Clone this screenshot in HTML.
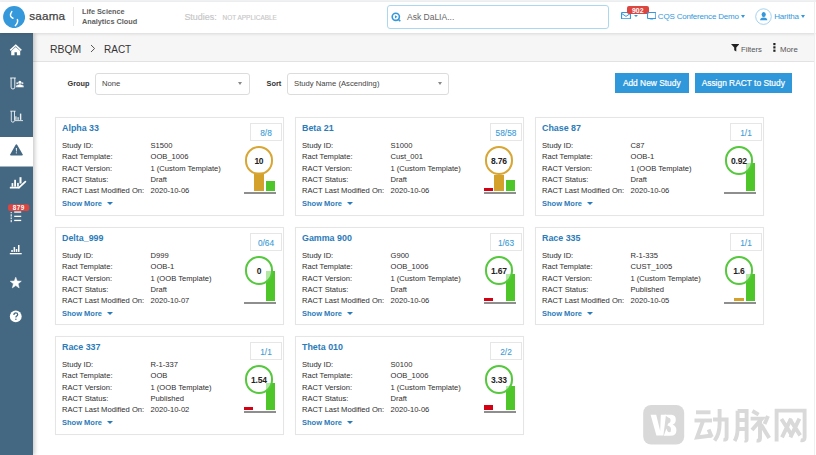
<!DOCTYPE html>
<html><head><meta charset="utf-8">
<style>
*{box-sizing:border-box;margin:0;padding:0}
html,body{width:816px;height:455px;overflow:hidden;background:#fff;font-family:"Liberation Sans",sans-serif;color:#333}
.a{position:absolute;white-space:nowrap}
#topstrip{position:absolute;left:0;top:0;width:816px;height:2px;background:#f1f2f4}
#header{position:absolute;left:0;top:2px;width:816px;height:31px;background:#fff;box-shadow:0 1px 3px rgba(0,0,0,.12);z-index:3}
#side{position:absolute;left:0;top:33px;width:33px;height:422px;background:#456882;z-index:2;box-shadow:2px 0 4px rgba(0,0,0,.2)}
#crumb{position:absolute;left:33px;top:33px;width:781px;height:29px;background:#f6f6f6;border-bottom:1px solid #e2e2e2}
#rline{position:absolute;left:814px;top:0;width:1px;height:455px;background:#efefef;z-index:6}
.sel{position:absolute;height:21.5px;border:1px solid #dcdcdc;border-radius:3px;background:#fff}
.sel .t{position:absolute;left:6px;top:4.5px;font-size:7.7px;color:#444}
.caret{position:absolute;width:0;height:0;border-left:2.5px solid transparent;border-right:2.5px solid transparent;border-top:3px solid #888}
.btn{position:absolute;top:73px;height:19.5px;background:#2f98db;color:#fff;font-size:8.4px;text-align:center;line-height:21px;-webkit-text-stroke:0.2px #fff}
.card{position:absolute;width:229px;height:98px;border:1px solid #e5e5e5;background:#fff;box-shadow:0 0 1px rgba(0,0,0,.04)}
.card .title{position:absolute;left:6px;top:4.8px;font-size:8.9px;font-weight:bold;color:#2b7bb9}
.card .lab{position:absolute;left:6px;font-size:7.6px;color:#2e2e2e}
.card .val{position:absolute;left:94.5px;font-size:7.6px;color:#2e2e2e}
.card .more{position:absolute;left:6px;top:80.7px;font-size:7.5px;color:#2b7bb9;font-weight:bold}
.card .more i{position:absolute;left:45.2px;top:3.3px;width:0;height:0;border-left:3px solid transparent;border-right:3px solid transparent;border-top:3.5px solid #2b7bb9}
.badge{position:absolute;left:194px;top:4.6px;width:32px;height:18px;border:1px solid #e6e6e6;color:#3c9bd8;font-size:8.3px;text-align:center;line-height:18px;-webkit-text-stroke:0.1px #3c9bd8}
.chart{position:absolute;left:188.2px;top:0;width:34px;height:80px}
.base{position:absolute;left:0;top:74px;width:32px;height:2px;background:#8e8e8e}
.bar{position:absolute;bottom:7px;width:9.2px}
.r{left:0;background:#d40014}
.g{left:10.3px;background:#d4a12b}
.gr{left:21.6px;width:9.4px;background:#4ec629}
.circ{position:absolute;left:0.4px;top:28.3px;width:28.6px;height:28.6px;border-radius:50%;border:2px solid #55c83d;background:rgba(255,255,255,.58);font-size:8.5px;font-weight:bold;color:#222;text-align:center;line-height:26.5px;letter-spacing:-0.25px}
.circ.gold{border-color:#d8a634}
</style></head><body>
<div id="topstrip"></div>
<div id="header">
  <!-- logo -->
  <svg class="a" style="left:3.3px;top:3.8px" width="22.2" height="22.2" viewBox="0 0 22.2 22.2">
    <circle cx="11.1" cy="11.1" r="11" fill="#3498da"/>
    <path d="M8.8 5.6 Q7 8 7.6 10 Q8.1 11.4 10 12.3" stroke="#fff" stroke-width="1.5" fill="none" stroke-linecap="round"/>
    <path d="M14.4 13.6 Q15.5 16 12.4 19.6" stroke="#fff" stroke-width="1.5" fill="none" stroke-linecap="round"/>
  </svg>
  <div class="a" style="left:29.2px;top:7px;font-size:11.7px;color:#444;letter-spacing:0.2px;-webkit-text-stroke:0.25px #444">saama</div>
  <div class="a" style="left:73px;top:5px;width:1px;height:19px;background:#e4e4e4"></div>
  <div class="a" style="left:82px;top:5.4px;font-size:7.3px;font-weight:bold;color:#606060;line-height:9.7px">Life Science<br>Analytics Cloud</div>
  <div class="a" style="left:184.4px;top:9.5px;font-size:8.95px;color:#c6c6c6;-webkit-text-stroke:0.15px #c6c6c6">Studies:</div>
  <div class="a" style="left:222.6px;top:12px;font-size:6.45px;color:#c6c6c6;-webkit-text-stroke:0.12px #c6c6c6">NOT APPLICABLE</div>
  <!-- search -->
  <div class="a" style="left:386.5px;top:3px;width:222.5px;height:23.5px;border:1px solid #acd7f1;border-radius:3px"></div>
  <svg class="a" style="left:391.2px;top:10px" width="10" height="10" viewBox="0 0 10 10">
    <circle cx="4.8" cy="4.8" r="3.6" stroke="#3498da" stroke-width="1.6" fill="none"/>
    <path d="M4 3.2 L6.4 4.8 L4 6.4Z" fill="#3498da"/>
    <path d="M7 7 L9.3 9.3" stroke="#3498da" stroke-width="1.6"/>
  </svg>
  <div class="a" style="left:407px;top:9.5px;font-size:8.5px;color:#666">Ask DaLIA...</div>
  <!-- envelope -->
  <svg class="a" style="left:621.3px;top:9.7px" width="10" height="7.4" viewBox="0 0 10 7.4">
    <rect x="0.55" y="0.55" width="8.9" height="6.3" rx="0.6" fill="none" stroke="#3498da" stroke-width="1.1"/>
    <path d="M0.8 1.6 L5 4.4 L9.2 1.6" fill="none" stroke="#3498da" stroke-width="1"/>
  </svg>
  <div class="caret" style="left:634px;top:12.9px;border-left-width:2.3px;border-right-width:2.3px;border-top:2.5px solid #3498da"></div>
  <div class="a" style="left:627px;top:3.5px;width:21.6px;height:8px;background:#dc4640;border-radius:2px;color:#fff;font-size:6.9px;font-weight:bold;text-align:center;line-height:9.2px;letter-spacing:0.1px">902</div>
  <!-- monitor -->
  <svg class="a" style="left:646.5px;top:9.5px" width="9.4" height="8.4" viewBox="0 0 9.4 8.4">
    <rect x="0.55" y="0.55" width="8.3" height="6" rx="0.5" fill="none" stroke="#3498da" stroke-width="1.1"/>
    <path d="M3.2 8 H6.2" stroke="#3498da" stroke-width="0.9"/>
  </svg>
  <div class="a" style="left:657.8px;top:10px;font-size:8px;letter-spacing:-0.18px;color:#3498da">CQS Conference Demo</div>
  <div class="caret" style="left:741.2px;top:13.2px;border-left-width:2.6px;border-right-width:2.6px;border-top:3px solid #3498da"></div>
  <!-- user -->
  <svg class="a" style="left:754.5px;top:5.5px" width="18" height="18" viewBox="0 0 18 18">
    <circle cx="8.5" cy="8.6" r="7.8" fill="none" stroke="#8cc6ec" stroke-width="0.8"/>
    <ellipse cx="8.7" cy="6.5" rx="2.1" ry="2.5" fill="#3498da"/>
    <path d="M5 12.3 Q5.2 9.6 8.7 9.4 Q12.2 9.6 12.4 12.3Z" fill="#3498da"/>
  </svg>
  <div class="a" style="left:774.3px;top:10px;font-size:8px;letter-spacing:-0.2px;color:#3498da">Haritha</div>
  <div class="caret" style="left:801px;top:13.2px;border-left-width:2.6px;border-right-width:2.6px;border-top:3px solid #3498da"></div>
</div>

<div id="side"></div>
<svg id="sideicons" style="position:absolute;left:0;top:0;z-index:4" width="33" height="455" viewBox="0 0 33 455">
<g fill="#fff" stroke="none">
<!-- home -->
<path d="M10.2 50.4 L15.75 45.2 L21.3 50.4" fill="none" stroke="#fff" stroke-width="1.5" stroke-linejoin="miter"/>
<path d="M11.2 51 L15.75 47 L20.2 51 V55.2 H16.9 V52.2 H14.5 V55.2 H11.2Z" fill="#fff"/>
</g>
<!-- tube + people -->
<g fill="none" stroke="#fff" stroke-width="1" opacity="0.88">
<path d="M10.2 78 H15.8 M11.1 78 V87.2 Q11.1 89 12.95 89 Q14.8 89 14.8 87.2 V78"/>
</g>
<g fill="#fff">
<circle cx="19.9" cy="82.2" r="1.5"/>
<circle cx="17.3" cy="83.2" r="1.05" opacity="0.85"/>
<circle cx="22.4" cy="83.2" r="1.05" opacity="0.85"/>
<path d="M17.4 87.3 Q17.4 84.3 19.9 84.3 Q22.4 84.3 22.4 87.3Z"/>
<path d="M15.8 87.3 Q15.8 84.9 17.4 84.9 Q18.2 84.9 18.4 85.3 L17.6 87.3Z" opacity="0.85"/>
<path d="M23.9 87.3 Q23.9 84.9 22.3 84.9 Q21.5 84.9 21.3 85.3 L22.1 87.3Z" opacity="0.85"/>
</g>
<!-- tube + chart -->
<g fill="none" stroke="#fff" stroke-width="0.9" opacity="0.9">
<path d="M10.3 111.2 H15.6 M11.3 111.2 V120.5 Q11.3 122.2 12.8 122.2 Q14.5 122.2 14.5 120.5 V111.2"/>
</g>
<g fill="#fff" opacity="0.9">
<rect x="15.3" y="116.3" width="1.2" height="3.6"/>
<rect x="17.5" y="117.2" width="1.2" height="2.7"/>
<rect x="19.9" y="113.6" width="1.4" height="6.3"/>
<rect x="15" y="120.2" width="8" height="0.9"/>
</g>
<!-- active -->
<rect x="0" y="137" width="33" height="29.5" fill="#fff"/>
<path d="M16.4 144.2 Q16.9 144.2 17.3 144.9 L22.6 154.3 Q23 155.6 21.8 155.6 H11 Q9.8 155.6 10.3 154.3 L15.5 144.9 Q15.9 144.2 16.4 144.2Z" fill="#456882"/>
<path d="M15.8 148 H16.9 L16.7 151.6 H16Z" fill="#fff"/>
<circle cx="16.35" cy="152.8" r="0.6" fill="#fff"/>
<!-- trend -->
<g fill="#fff">
<rect x="11.6" y="183.1" width="1.7" height="3.6"/>
<rect x="14.2" y="179.8" width="1.8" height="6.9"/>
<rect x="17.1" y="182.9" width="1.7" height="3.8"/>
<rect x="19.5" y="177.2" width="2" height="6.3"/>
<rect x="9.8" y="186.8" width="9.6" height="1.8" rx="0.5"/>
</g>
<path d="M19 187.6 L25.4 181.6" stroke="#fff" stroke-width="1.7" stroke-linecap="round"/>
<!-- badge 879 -->
<rect x="8.1" y="204.2" width="21.1" height="6.8" rx="2" fill="#dc4640"/>
<text x="18.8" y="210.2" font-family="Liberation Sans" font-size="6.4" font-weight="bold" fill="#fff" text-anchor="middle" letter-spacing="0.45">879</text>
<g fill="#fff">
<rect x="14.2" y="211.4" width="7" height="1.3"/>
<rect x="14.2" y="215.7" width="7" height="1.3"/>
<rect x="14.2" y="219.8" width="7" height="1.3"/>
<rect x="10.6" y="212" width="1.3" height="1.2" opacity="0.8"/><rect x="10.6" y="214.2" width="1.3" height="2.4" opacity="0.8"/><rect x="10.6" y="217.4" width="1.3" height="1.6" opacity="0.8"/><rect x="10.6" y="219.8" width="1.3" height="2.4" opacity="0.8"/>
</g>
<!-- bars -->
<g fill="#fff">
<rect x="11.2" y="250.1" width="1.7" height="1.8"/>
<rect x="13.6" y="247" width="1.5" height="4.9"/>
<rect x="15.8" y="249" width="1.5" height="2.9"/>
<rect x="18" y="245" width="1.5" height="6.9"/>
<rect x="9.8" y="253" width="11.9" height="1.3"/>
</g>
<!-- star -->
<path d="M15.75 277.2 L17.2 281 L21.3 281.2 L18.1 283.8 L19.2 287.9 L15.75 285.6 L12.3 287.9 L13.4 283.8 L10.2 281.2 L14.3 281Z" fill="#fff" stroke="#fff" stroke-width="0.5" stroke-linejoin="round"/>
<!-- question -->
<circle cx="15.75" cy="316.4" r="5.9" fill="#fff"/>
<path d="M13.9 315 Q13.9 312.8 15.8 312.8 Q17.7 312.8 17.7 314.5 Q17.7 315.5 16.6 316.1 Q15.9 316.5 15.9 317.6" fill="none" stroke="#456882" stroke-width="1.2"/>
<circle cx="15.9" cy="319.3" r="0.75" fill="#456882"/>
</svg>

<div id="crumb">
  <div class="a" style="left:17px;top:10.5px;font-size:10.4px;color:#333">RBQM</div>
  <svg class="a" style="left:56.5px;top:11px" width="6" height="9" viewBox="0 0 6 9"><path d="M1 1 L4.6 4.5 L1 8" fill="none" stroke="#555" stroke-width="1"/></svg>
  <div class="a" style="left:71px;top:10.5px;font-size:10px;color:#333">RACT</div>
  <svg class="a" style="left:697.5px;top:11px" width="8.5" height="7.5" viewBox="0 0 8.5 7.5"><path d="M0 0 H8.5 L5.3 3.4 V7.5 L3.2 6.2 V3.4Z" fill="#222"/></svg>
  <div class="a" style="left:708px;top:12px;font-size:7.7px;color:#555">Filters</div>
  <svg class="a" style="left:740px;top:10px" width="3" height="9" viewBox="0 0 3 9"><rect x="0.3" y="0" width="2.2" height="2.2" fill="#222"/><rect x="0.3" y="3.3" width="2.2" height="2.2" fill="#222"/><rect x="0.3" y="6.6" width="2.2" height="2.2" fill="#222"/></svg>
  <div class="a" style="left:747px;top:12px;font-size:7.8px;color:#555">More</div>
</div>
<div id="rline"></div>

<!-- filter row -->
<div class="a" style="left:67.5px;top:79px;font-size:7.3px;font-weight:bold;color:#333">Group</div>
<div class="sel" style="left:95px;top:73px;width:154.5px"><div class="t">None</div><div class="caret" style="left:141.5px;top:8px;border-left-width:2.6px;border-right-width:2.6px;border-top-width:3px"></div></div>
<div class="a" style="left:266.5px;top:79px;font-size:7.4px;font-weight:bold;color:#333">Sort</div>
<div class="sel" style="left:287px;top:73px;width:161.5px"><div class="t">Study Name (Ascending)</div><div class="caret" style="left:149.5px;top:8px;border-left-width:2.6px;border-right-width:2.6px;border-top-width:3px"></div></div>
<div class="btn" style="left:614.5px;width:74.5px">Add New Study</div>
<div class="btn" style="left:694.5px;width:97.5px">Assign RACT to Study</div>

<div id="cards">
<div class="card" style="left:55px;top:117px;height:99px"><div class="title">Alpha 33</div><div class="lab" style="top:23.0px">Study ID:</div><div class="val" style="top:23.0px">S1500</div><div class="lab" style="top:34.3px">Ract Template:</div><div class="val" style="top:34.3px">OOB_1006</div><div class="lab" style="top:45.6px">RACT Version:</div><div class="val" style="top:45.6px">1 (Custom Template)</div><div class="lab" style="top:56.9px">RACT Status:</div><div class="val" style="top:56.9px">Draft</div><div class="lab" style="top:68.1px">RACT Last Modified On:</div><div class="val" style="top:68.1px">2020-10-06</div><div class="more">Show More<i></i></div><div class="badge">8/8</div><div class="chart"><div class="base"></div><div class="bar g" style="height:19px"></div><div class="bar gr" style="height:9.8px"></div><div class="circ gold">10</div></div></div>
<div class="card" style="left:295px;top:117px;height:99px"><div class="title">Beta 21</div><div class="lab" style="top:23.0px">Study ID:</div><div class="val" style="top:23.0px">S1000</div><div class="lab" style="top:34.3px">Ract Template:</div><div class="val" style="top:34.3px">Cust_001</div><div class="lab" style="top:45.6px">RACT Version:</div><div class="val" style="top:45.6px">1 (Custom Template)</div><div class="lab" style="top:56.9px">RACT Status:</div><div class="val" style="top:56.9px">Draft</div><div class="lab" style="top:68.1px">RACT Last Modified On:</div><div class="val" style="top:68.1px">2020-10-06</div><div class="more">Show More<i></i></div><div class="badge">58/58</div><div class="chart"><div class="base"></div><div class="bar r" style="height:3px"></div><div class="bar g" style="height:16px"></div><div class="bar gr" style="height:11px"></div><div class="circ gold">8.76</div></div></div>
<div class="card" style="left:535px;top:117px;height:99px"><div class="title">Chase 87</div><div class="lab" style="top:23.0px">Study ID:</div><div class="val" style="top:23.0px">C87</div><div class="lab" style="top:34.3px">Ract Template:</div><div class="val" style="top:34.3px">OOB-1</div><div class="lab" style="top:45.6px">RACT Version:</div><div class="val" style="top:45.6px">1 (OOB Template)</div><div class="lab" style="top:56.9px">RACT Status:</div><div class="val" style="top:56.9px">Draft</div><div class="lab" style="top:68.1px">RACT Last Modified On:</div><div class="val" style="top:68.1px">2020-10-06</div><div class="more">Show More<i></i></div><div class="badge">1/1</div><div class="chart"><div class="base"></div><div class="bar gr" style="height:28.5px"></div><div class="circ">0.92</div></div></div>
<div class="card" style="left:55px;top:227px;height:98px"><div class="title">Delta_999</div><div class="lab" style="top:23.0px">Study ID:</div><div class="val" style="top:23.0px">D999</div><div class="lab" style="top:34.3px">Ract Template:</div><div class="val" style="top:34.3px">OOB-1</div><div class="lab" style="top:45.6px">RACT Version:</div><div class="val" style="top:45.6px">1 (OOB Template)</div><div class="lab" style="top:56.9px">RACT Status:</div><div class="val" style="top:56.9px">Draft</div><div class="lab" style="top:68.1px">RACT Last Modified On:</div><div class="val" style="top:68.1px">2020-10-07</div><div class="more">Show More<i></i></div><div class="badge">0/64</div><div class="chart"><div class="base"></div><div class="bar gr" style="height:29.6px"></div><div class="circ">0</div></div></div>
<div class="card" style="left:295px;top:227px;height:98px"><div class="title">Gamma 900</div><div class="lab" style="top:23.0px">Study ID:</div><div class="val" style="top:23.0px">G900</div><div class="lab" style="top:34.3px">Ract Template:</div><div class="val" style="top:34.3px">OOB_1006</div><div class="lab" style="top:45.6px">RACT Version:</div><div class="val" style="top:45.6px">1 (Custom Template)</div><div class="lab" style="top:56.9px">RACT Status:</div><div class="val" style="top:56.9px">Draft</div><div class="lab" style="top:68.1px">RACT Last Modified On:</div><div class="val" style="top:68.1px">2020-10-06</div><div class="more">Show More<i></i></div><div class="badge">1/63</div><div class="chart"><div class="base"></div><div class="bar r" style="height:3px"></div><div class="bar gr" style="height:27px"></div><div class="circ">1.67</div></div></div>
<div class="card" style="left:535px;top:227px;height:98px"><div class="title">Race 335</div><div class="lab" style="top:23.0px">Study ID:</div><div class="val" style="top:23.0px">R-1-335</div><div class="lab" style="top:34.3px">Ract Template:</div><div class="val" style="top:34.3px">CUST_1005</div><div class="lab" style="top:45.6px">RACT Version:</div><div class="val" style="top:45.6px">1 (Custom Template)</div><div class="lab" style="top:56.9px">RACT Status:</div><div class="val" style="top:56.9px">Published</div><div class="lab" style="top:68.1px">RACT Last Modified On:</div><div class="val" style="top:68.1px">2020-10-05</div><div class="more">Show More<i></i></div><div class="badge">1/1</div><div class="chart"><div class="base"></div><div class="bar g" style="height:3.4px"></div><div class="bar gr" style="height:26.6px"></div><div class="circ">1.6</div></div></div>
<div class="card" style="left:55px;top:336px;height:99px"><div class="title">Race 337</div><div class="lab" style="top:23.0px">Study ID:</div><div class="val" style="top:23.0px">R-1-337</div><div class="lab" style="top:34.3px">Ract Template:</div><div class="val" style="top:34.3px">OOB</div><div class="lab" style="top:45.6px">RACT Version:</div><div class="val" style="top:45.6px">1 (OOB Template)</div><div class="lab" style="top:56.9px">RACT Status:</div><div class="val" style="top:56.9px">Published</div><div class="lab" style="top:68.1px">RACT Last Modified On:</div><div class="val" style="top:68.1px">2020-10-02</div><div class="more">Show More<i></i></div><div class="badge">1/1</div><div class="chart"><div class="base"></div><div class="bar r" style="height:2.8px"></div><div class="bar gr" style="height:26.6px"></div><div class="circ">1.54</div></div></div>
<div class="card" style="left:295px;top:336px;height:99px"><div class="title">Theta 010</div><div class="lab" style="top:23.0px">Study ID:</div><div class="val" style="top:23.0px">S0100</div><div class="lab" style="top:34.3px">Ract Template:</div><div class="val" style="top:34.3px">OOB_1006</div><div class="lab" style="top:45.6px">RACT Version:</div><div class="val" style="top:45.6px">1 (Custom Template)</div><div class="lab" style="top:56.9px">RACT Status:</div><div class="val" style="top:56.9px">Draft</div><div class="lab" style="top:68.1px">RACT Last Modified On:</div><div class="val" style="top:68.1px">2020-10-06</div><div class="more">Show More<i></i></div><div class="badge">2/2</div><div class="chart"><div class="base"></div><div class="bar r" style="height:5.5px"></div><div class="bar gr" style="height:23.8px"></div><div class="circ">3.33</div></div></div>
</div>
<svg id="wm" style="position:absolute;left:640px;top:400px;z-index:5" width="174" height="50" viewBox="640 400 174 50">
<rect x="643.2" y="405" width="41" height="39.6" rx="8" fill="#d9d9d9"/>
<path d="M650.6 414.8 H656.2 L660.2 431 L660.8 414.8 H666 L663.4 435.6 H656.4Z" fill="#fff"/>
<path d="M664.4 414.8 H671.5 Q676 415 675.8 420 Q675.6 423.6 672.6 424.6 Q676.4 426 676.4 430.4 Q676.2 435.8 670.6 435.8 H663.8 L666.4 428.6 Q667.6 432.4 669.2 432.2 Q671.2 432 671 429.4 Q670.8 426.2 667.4 425.6 L668.2 423.4 Q670.8 422.8 670.6 419.8 Q670.4 417.8 668.6 417.8 Z" fill="#fff"/>
<g fill="none" stroke="#d9d9d9" stroke-width="3.9" stroke-linecap="butt" stroke-linejoin="miter">
<!-- 动 -->
<path d="M696 412.3 H710.5"/>
<path d="M694.5 420.5 H712"/>
<path d="M703 421 L697 437.5 L712 435.5"/>
<path d="M708.6 429.5 L711.8 437"/>
<path d="M713 419.5 H726.6 V437.5 Q726.6 440 723.4 439.6"/>
<path d="M719.6 409 V424 Q719.6 434 714.6 440.6"/>
<!-- 脉 -->
<path d="M737.6 410.8 V428 Q737.6 436 734.6 441"/>
<path d="M737.6 411 H746.6 V439.4 Q746.6 441 744.6 440.4"/>
<path d="M737.6 420 H746 M737.6 429 H746"/>
<path d="M752.4 411 L758.6 414.6"/>
<path d="M750.6 418.6 H762 L752 430"/>
<path d="M760 418 V438.6 Q760 441 756.6 440.6"/>
<path d="M761 424.6 L769.2 438"/>
<path d="M768 416 L764.6 424"/>
<!-- 网 -->
<path d="M776.6 441.4 V410.6 H804.6 V437.4 Q804.6 441 800.6 440.2"/>
<path d="M781.4 419 L792 435.4 M791 418.6 L782 437.4"/>
<path d="M789.6 419 L800.2 435.4 M799.4 418.6 L790.4 437.4"/>
</g>
</svg>
</body></html>
